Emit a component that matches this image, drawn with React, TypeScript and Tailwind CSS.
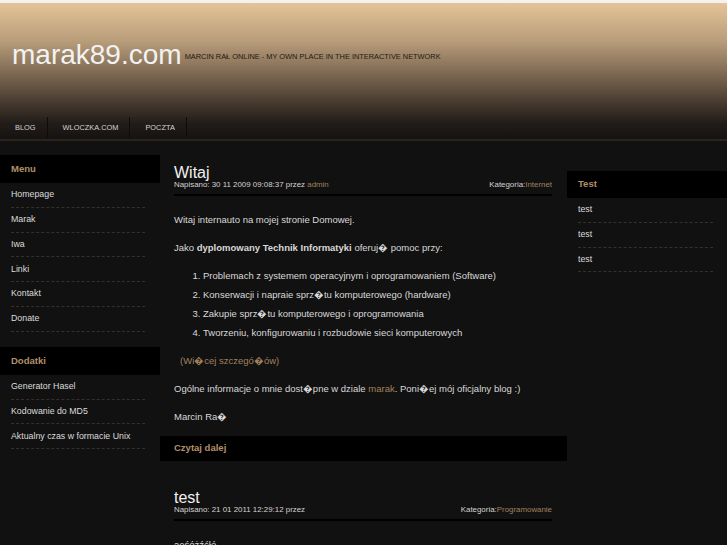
import React from 'react';

const FONT = "font-['Liberation_Sans',Arial,sans-serif]";
const R = '\uFFFD';

const NAV = ['BLOG', 'WLOCZKA.COM', 'POCZTA'];
const MENU = ['Homepage', 'Marak', 'Iwa', 'Linki', 'Kontakt', 'Donate'];
const EXTRAS = ['Generator Hasel', 'Kodowanie do MD5', 'Aktualny czas w formacie Unix'];

function BoxTitle({ children }: { children: React.ReactNode }) {
  return (
    <div className="h-[28px] bg-black pl-[11px] flex items-center text-[9.5px] font-bold text-[#b39069]">
      {children}
    </div>
  );
}

function SideList({ items }: { items: string[] }) {
  return (
    <ul className="pl-[11px]">
      {items.map((it) => (
        <li
          key={it}
          className="w-[134px] h-[24.8px] flex items-center border-b border-dashed border-[#3a2f25] text-[8.8px] text-[#dcdcdc]"
        >
          {it}
        </li>
      ))}
    </ul>
  );
}

function PostHead({ title, date, author, cat }: { title: string; date: string; author?: string; cat: string }) {
  return (
    <div className="border-b-2 border-black pb-[5px]">
      <h2 className="text-[16px] leading-[15px] text-[#f0f0f0]">{title}</h2>
      <div className="flex justify-between text-[7.9px] leading-[9px] text-[#d2d2d2]">
        <span>
          Napisano: {date} przez {author && <span className="text-[#a0815c]">{author}</span>}
        </span>
        <span>
          Kategoria:<span className="text-[#a0815c]">{cat}</span>
        </span>
      </div>
    </div>
  );
}

export default function App() {
  return (
    <div className={`${FONT} w-[727px] h-[545px] overflow-hidden bg-[#121111]`}>
      {/* header */}
      <div className="h-[3px] bg-[#f4f2ef]" />
      <div className="h-[136px] flex flex-col bg-[linear-gradient(to_bottom,#e4c497_0%,#b89d7a_28%,#7d6853_52%,#45392e_74%,#231d19_88%,#151211_100%)]">
        <div className="flex items-end pl-[12px] pt-[36px]">
          <h1 className="text-[28px] leading-[32px] text-[#f2f2f2]">marak89.com</h1>
          <span className="ml-[3px] mb-[10px] text-[7.4px] leading-[8px] text-[#1f1812]">
            MARCIN RAŁ ONLINE - MY OWN PLACE IN THE INTERACTIVE NETWORK
          </span>
        </div>
        <nav className="mt-auto mb-[1px] flex h-[21px]">
          {NAV.map((n) => (
            <div
              key={n}
              className="pl-[15px] pr-[11px] flex items-center border-r border-[#0e0b0a] text-[7.4px] text-[#d4d4d4]"
            >
              {n}
            </div>
          ))}
        </nav>
      </div>
      <div className="h-[2px] bg-[#2a231e]" />

      {/* body */}
      <div className="flex">
        <aside className="w-[160px] pt-[14px]">
          <BoxTitle>Menu</BoxTitle>
          <SideList items={MENU} />
          <div className="mt-[15px]">
            <BoxTitle>Dodatki</BoxTitle>
            <SideList items={EXTRAS} />
          </div>
        </aside>

        <main className="w-[407px] pt-[24px]">
          <div className="pl-[14px] pr-[15px]">
            <PostHead title="Witaj" date="30 11 2009 09:08:37" author="admin" cat="Internet" />
            <div className="mt-[17px] text-[9.5px] leading-[13px] text-[#d8d8d8]">
              <p className="mb-[15px]">Witaj internauto na mojej stronie Domowej.</p>
              <p className="mb-[15px]">
                Jako <b>dyplomowany Technik Informatyki</b> oferuj{R} pomoc przy:
              </p>
              <ol className="list-decimal pl-[29px] mb-[15px] space-y-[6px]">
                <li>Problemach z systemem operacyjnym i oprogramowaniem (Software)</li>
                <li>Konserwacji i napraie sprz{R}tu komputerowego (hardware)</li>
                <li>Zakupie sprz{R}tu komputerowego i oprogramowania</li>
                <li>Tworzeniu, konfigurowaniu i rozbudowie sieci komputerowych</li>
              </ol>
              <p className="mb-[15px] pl-[6px] text-[#a0815c]">
                (Wi{R}cej szczegó{R}ów)
              </p>
              <p className="mb-[15px]">
                Ogólne informacje o mnie dost{R}pne w dziale <span className="text-[#a0815c]">marak</span>. Poni{R}ej mój
                oficjalny blog :)
              </p>
              <p>Marcin Ra{R}</p>
            </div>
          </div>
          <div className="mt-[13px] h-[25px] bg-black pl-[14px] flex items-center text-[9.5px] font-bold text-[#b39069]">
            Czytaj dalej
          </div>
          <div className="pl-[14px] pr-[15px] pt-[29px]">
            <PostHead title="test" date="21 01 2011 12:29:12" cat="Programowanie" />
            <p className="mt-[17px] text-[9.5px] leading-[13px] text-[#d8d8d8]">ąęśóżźćłó</p>
          </div>
        </main>

        <aside className="w-[160px] pt-[30px]">
          <div className="h-[27px] bg-black pl-[11px] flex items-center text-[9.5px] font-bold text-[#b39069]">
            Test
          </div>
          <ul className="pl-[11px]">
            {['test', 'test', 'test'].map((t, i) => (
              <li
                key={i}
                className="w-[135px] h-[24.8px] flex items-center border-b border-dashed border-[#3a2f25] text-[8.8px] text-[#dcdcdc]"
              >
                {t}
              </li>
            ))}
          </ul>
        </aside>
      </div>
    </div>
  );
}
